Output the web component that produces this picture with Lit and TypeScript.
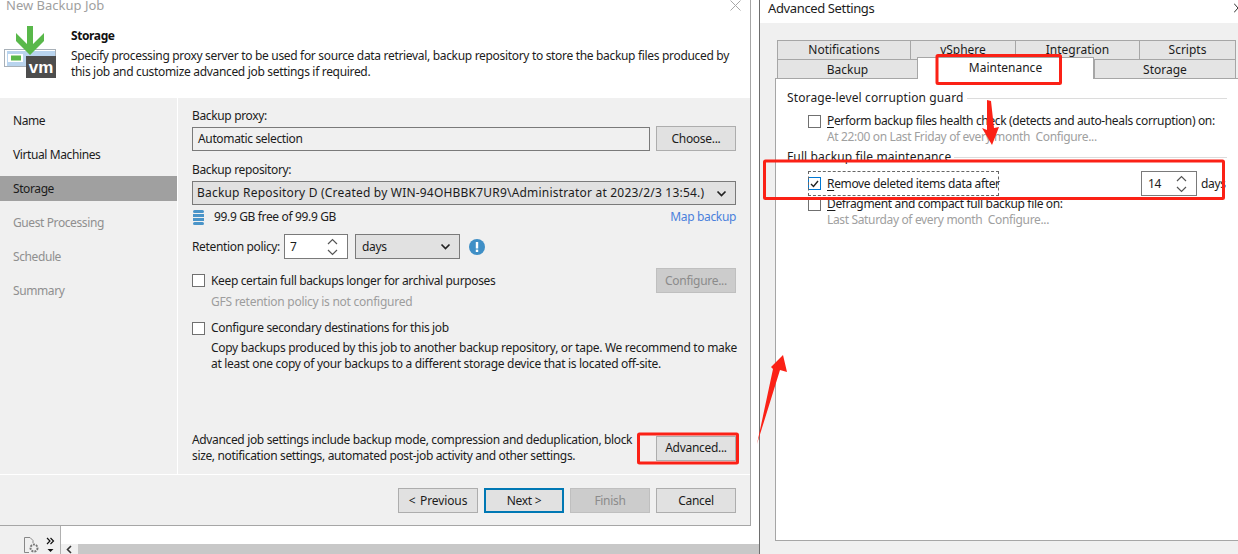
import { LitElement, html, css, svg } from "lit";
import { customElement } from "lit/decorators.js";

const chev = (up: boolean) => svg`<svg class="chev" width="11" height="7" viewBox="0 0 11 7"><path d=${up ? "M1 6 L5.5 1.5 L10 6" : "M1 1 L5.5 5.5 L10 1"} fill="none" stroke="#555" stroke-width="1.2"/></svg>`;
const caret = svg`<svg class="caret" width="11" height="7" viewBox="0 0 11 7"><path d="M1.5 1.5 L5.5 5.5 L9.5 1.5" fill="none" stroke="#222" stroke-width="1.7"/></svg>`;

@customElement("app-root")
export class AppRoot extends LitElement {
  static styles = css`
    :host { display: block; position: relative; width: 1238px; height: 554px; overflow: hidden; background: #fff;
      font-family: "Noto Sans", sans-serif; font-size: 12px; line-height: 16px; color: #1c1c1c; letter-spacing: -.35px; }
    * { box-sizing: border-box; }
    .root { display: flex; height: 554px; }
    .left { width: 760px; flex: none; border-right: 1px solid #6e6e6e; display: flex; flex-direction: column; }
    .dialog { width: 751px; height: 526px; flex: none; border-right: 1px solid #a6a6a6; border-bottom: 1px solid #a6a6a6; display: flex; flex-direction: column; }
    .wtitle { height: 10px; position: relative; display: flex; justify-content: space-between; align-items: center; padding: 0 9px 0 6px; flex: none; }
    .wtitle span { font-size: 13px; color: #a0a0a0; letter-spacing: 0; white-space: nowrap; }
    .head { height: 88px; flex: none; display: flex; background: #fff; }
    .logo { width: 71px; flex: none; position: relative; }
    .logo svg { display: block; }
    .vm { position: absolute; left: 26px; top: 47px; width: 30px; height: 22px; display: flex; align-items: center; justify-content: center; color: #fff; font: bold 17px/20px "Liberation Sans", sans-serif; letter-spacing: 0; }
    .htext { padding-top: 18px; }
    .htext b { display: block; font-weight: 700; color: #111; height: 16px; margin-bottom: 4px; letter-spacing: -.4px; }
    .htext p { margin: 0; width: 670px; letter-spacing: -.32px; }
    .main { flex: 1; display: flex; background: #f0f0f0; border-bottom: 1px solid #fff; min-height: 0; }
    .nav { width: 178px; flex: none; border-right: 1px solid #fff; padding-top: 10px; display: flex; flex-direction: column; gap: 9px; letter-spacing: -.4px; }
    .nav div { height: 25px; padding-left: 13px; display: flex; align-items: center; }
    .nav .sel { background: #a0a0a0; }
    .nav .dim { color: #8f8f8f; }
    .content { flex: 1; padding: 10px 14px 0 14px; display: flex; flex-direction: column; min-width: 0; }
    .lbl { height: 16px; }
    .row { display: flex; align-items: center; }
    .row.between { justify-content: space-between; }
    .input { flex: 1; height: 24px; border: 1px solid #7a7a7a; padding: 0 5px; display: flex; align-items: center; margin-right: 6px; }
    .btn { width: 80px; height: 25px; flex: none; background: #e1e1e1; border: 1px solid #adadad; display: flex; align-items: center; justify-content: center; color: #1c1c1c; letter-spacing: -.3px; }
    .btn.off { background: #cccccc; border-color: #bfbfbf; color: #8b8b8b; }
    .btn.primary { border: 2px solid #0078b4; }
    .btn.prev { letter-spacing: -.1px; word-spacing: 1.5px; }
    .select { height: 24px; background: #e1e1e1; border: 1px solid #7a7a7a; padding: 0 8px 0 4px; display: flex; align-items: center; justify-content: space-between; white-space: nowrap; }
    .select.repo { letter-spacing: .2px; }
    .select.days { width: 105px; padding-left: 6px; margin-left: 7px; height: 25px; }
    .mt2 { margin-top: 2px; }
    .repo-label { margin-top: 11px; margin-bottom: 3px; }
    .free { height: 16px; margin-top: 4px; }
    .free .l { display: flex; align-items: center; gap: 8px; }
    .link { color: #4a80dc; }
    .ret { margin-top: 9px; height: 25px; }
    .ret-label { width: 88px; flex: none; white-space: nowrap; }
    .spin { height: 25px; background: #fff; border: 1px solid #7a7a7a; display: flex; align-items: center; justify-content: space-between; padding: 0 9px 0 5px; flex: none; }
    .spin.ret-s { width: 64px; margin-left: 4px; padding-left: 5px; }
    .arrows { display: flex; flex-direction: column; gap: 4px; }
    .chev { display: block; }
    .info { margin-left: 9px; display: block; }
    .chk { width: 13px; height: 13px; flex: none; background: #fff; border: 1px solid #707070; display: block; }
    .opt { display: flex; align-items: center; gap: 6px; height: 16px; }
    .sub { padding-left: 19px; }
    .gray { color: #9d9d9d; }
    .keep { margin-top: 9px; height: 25px; }
    .gfs { margin-top: 1px; height: 16px; letter-spacing: -.26px; }
    .sec { margin-top: 10px; }
    .copy { margin-top: 4px; margin-right: -6px; letter-spacing: -.31px; }
    .sub p, .adv p { margin: 0; }
    .adv { margin-top: auto; padding-bottom: 10px; display: flex; align-items: center; justify-content: space-between; }
    .adv p { width: 450px; }
    .foot { height: 50px; flex: none; background: #f0f0f0; display: flex; justify-content: flex-end; align-items: flex-start; gap: 6px; padding: 13px 14px 0 0; }
    .strip { flex: 1; display: flex; min-height: 0; }
    .gut { width: 61px; flex: none; background: #f0f0f0; border-right: 1px solid #b0b0b0; position: relative; display: flex; justify-content: flex-end; align-items: flex-end; gap: 5px; padding: 0 5px 0 0; }
    .sb { flex: 1; display: flex; flex-direction: column; justify-content: flex-end; }
    .track { height: 10px; display: flex; background: #c8c8c8; }
    .track i { width: 17px; background: #f0f0f0; display: flex; align-items: center; justify-content: center; }
    .right { flex: 1; min-width: 0; display: flex; flex-direction: column; }
    .rtitle { height: 23px; flex: none; display: flex; align-items: center; justify-content: space-between; padding: 0 0 7px 8px; font-size: 13px; white-space: nowrap; letter-spacing: -.37px; }
    .rbody { flex: 1; background: #f0f0f0; padding: 17px 0 13px 15px; display: flex; flex-direction: column; min-height: 0; }
    .tabs { display: grid; height: 19px; margin-left: 2px; flex: none; letter-spacing: 0; }
    .t1 { grid-template-columns: 133px 105px 124px 97px; }
    .t2 { grid-template-columns: 140px 177px 142px; }
    .tab { background: #e4e4e4; border: 1px solid #a6a6a6; border-bottom: none; border-right: none; display: flex; align-items: center; justify-content: center; }
    .tab:last-child { border-right: 1px solid #a6a6a6; }
    .tab.on { background: #fff; height: 22px; margin-top: -2px; position: relative; z-index: 1; border-right: 1px solid #a6a6a6; padding-bottom: 1px; }
    .panel { flex: 1; background: #fff; border: 1px solid #a6a6a6; border-right: none; margin-top: 0; padding: 11px 11px 0 11px; }
    .leg { display: flex; align-items: center; gap: 3px; height: 16px; white-space: nowrap; letter-spacing: .12px; }
    .leg::after { content: ""; flex: 1; height: 1px; background: #dcdcdc; }
    .leg.second { margin-top: 4px; }
    .popt { display: flex; align-items: center; gap: 6px; height: 16px; margin-left: 21px; white-space: nowrap; }
    .psub { margin-left: 40px; white-space: nowrap; color: #a0a0a0; height: 16px; }
    .u { text-decoration: underline; text-underline-offset: 2px; }
    .mt7 { margin-top: 7px; }
    .rm { display: flex; align-items: center; height: 25px; margin-top: 6px; margin-left: 21px; }
    .focus { display: flex; align-items: center; gap: 6px; height: 25px; width: 191px; outline: 1px dashed #666; outline-offset: -1px; white-space: nowrap; }
    .chk.on { border-color: #0078d4; display: flex; align-items: center; justify-content: center; }
    .spin.days-s { width: 56px; margin-left: auto; padding: 0 9px 0 6px; }
    .dlabel { margin-left: 4px; width: 26px; white-space: nowrap; }
    .anno { position: absolute; left: 0; top: 0; pointer-events: none; z-index: 5; }
  `;

  render() {
    const nav = [["Name", ""], ["Virtual Machines", ""], ["Storage", "sel"], ["Guest Processing", "dim"], ["Schedule", "dim"], ["Summary", "dim"]];
    return html`
      <div class="root">
        <div class="left">
          <div class="dialog">
            <div class="wtitle"><span>New Backup Job</span>
              <svg width="11" height="11" viewBox="0 0 11 11"><path d="M.5 .5 L10.5 10.5 M10.5 .5 L.5 10.5" stroke="#a8a8a8" fill="none"/></svg></div>
            <div class="head">
              <div class="logo">
                <svg width="71" height="88" viewBox="0 10 71 88">
                  <rect x="4.5" y="49.5" width="51" height="17" fill="#fff" stroke="#a8b0b8"/>
                  <rect x="7" y="51" width="48" height="15" fill="#b9d4ee"/>
                  <rect x="8" y="54" width="15" height="8" fill="#fff"/>
                  <rect x="11" y="55.5" width="10" height="5" fill="#59b84a"/>
                  <rect x="26" y="56" width="30" height="22" fill="#4d4d4d"/>
                  <path d="M27 26 H33 V44 L44 33 V41 L30 55 L16 41 V33 L27 44 Z" fill="#59b84a"/>
                </svg>
                <div class="vm">vm</div>
              </div>
              <div class="htext"><b>Storage</b><p>Specify processing proxy server to be used for source data retrieval, backup repository to store the backup files produced by this job and customize advanced job settings if required.</p></div>
            </div>
            <div class="main">
              <div class="nav">${nav.map(([t, c]) => html`<div class=${c}>${t}</div>`)}</div>
              <div class="content">
                <div class="lbl">Backup proxy:</div>
                <div class="row mt2"><div class="input">Automatic selection</div><div class="btn">Choose...</div></div>
                <div class="lbl repo-label">Backup repository:</div>
                <div class="select repo"><span>Backup Repository D (Created by WIN-94OHBBK7UR9\\Administrator at 2023/2/3 13:54.)</span>${caret}</div>
                <div class="row between free">
                  <div class="l"><svg width="14" height="16" viewBox="0 0 14 16"><g fill="#4a94c8"><rect x="1" y="1" width="11" height="3" rx="1.5"/><rect x="1" y="5" width="11" height="3"/><rect x="1" y="9" width="11" height="3"/><rect x="1" y="13" width="11" height="3" rx="1.5"/></g></svg><span>99.9 GB free of 99.9 GB</span></div>
                  <span class="link">Map backup</span>
                </div>
                <div class="row ret">
                  <span class="ret-label">Retention policy:</span>
                  <div class="spin ret-s"><span>7</span><div class="arrows">${chev(true)}${chev(false)}</div></div>
                  <div class="select days"><span>days</span>${caret}</div>
                  <svg class="info" width="16" height="16" viewBox="0 0 16 16"><circle cx="8" cy="8" r="8" fill="#3f8fc6"/><rect x="6.8" y="3" width="2.4" height="6.5" fill="#fff"/><rect x="6.8" y="10.6" width="2.4" height="2.4" fill="#fff"/></svg>
                </div>
                <div class="row between keep">
                  <div class="opt"><span class="chk"></span><span>Keep certain full backups longer for archival purposes</span></div>
                  <div class="btn off">Configure...</div>
                </div>
                <div class="sub gray gfs">GFS retention policy is not configured</div>
                <div class="opt sec"><span class="chk"></span><span>Configure secondary destinations for this job</span></div>
                <div class="sub copy"><p>Copy backups produced by this job to another backup repository, or tape. We recommend to make at least one copy of your backups to a different storage device that is located off-site.</p></div>
                <div class="adv"><p>Advanced job settings include backup mode, compression and deduplication, block size, notification settings, automated post-job activity and other settings.</p><div class="btn">Advanced...</div></div>
              </div>
            </div>
            <div class="foot">
              <div class="btn prev">&lt; Previous</div><div class="btn primary">Next &gt;</div><div class="btn off">Finish</div><div class="btn">Cancel</div>
            </div>
          </div>
          <div class="strip">
            <div class="gut">
              <svg width="18" height="18" viewBox="0 0 18 18"><path d="M1.5 16.5 V1.5 H7 L10 4.5 V7 M1.5 16.5 H6" fill="none" stroke="#888"/><circle cx="11" cy="12" r="3.5" fill="none" stroke="#777" stroke-width="2" stroke-dasharray="2 1"/></svg>
              <svg width="9" height="18" viewBox="0 0 9 18"><path d="M1 2 L4 5 L1 8 M4.5 2 L7.5 5 L4.5 8" fill="none" stroke="#111" stroke-width="1.2"/><path d="M1.5 13 H7.5 L4.5 16 Z" fill="#111"/></svg>
            </div>
            <div class="sb"><div class="track"><i><svg width="7" height="9" viewBox="0 0 7 9"><path d="M5 1 L1.5 4.5 L5 8" fill="none" stroke="#333" stroke-width="1.6"/></svg></i></div></div>
          </div>
        </div>
        <div class="right">
          <div class="rtitle"><span>Advanced Settings</span><svg width="4" height="11" viewBox="0 0 4 11"><path d="M0 .5 L4 5" stroke="#333" fill="none"/><path d="M0 9.5 L4 5" stroke="#333" fill="none"/></svg></div>
          <div class="rbody">
            <div class="tabs t1"><div class="tab">Notifications</div><div class="tab">vSphere</div><div class="tab">Integration</div><div class="tab">Scripts</div></div>
            <div class="tabs t2"><div class="tab">Backup</div><div class="tab on">Maintenance</div><div class="tab">Storage</div></div>
            <div class="panel">
              <div class="leg">Storage-level corruption guard</div>
              <div class="popt mt7"><span class="chk"></span><span><span class="u">P</span>erform backup files health check (detects and auto-heals corruption) on:</span></div>
              <div class="psub">At 22:00 on Last Friday of every month&nbsp; Configure...</div>
              <div class="leg second">Full backup file maintenance</div>
              <div class="rm">
                <div class="focus"><span class="chk on"><svg width="9" height="8" viewBox="0 0 9 8"><path d="M1 4 L3.5 6.5 L8 1" fill="none" stroke="#222" stroke-width="1.4"/></svg></span><span><span class="u">R</span>emove deleted items data after</span></div>
                <div class="spin days-s"><span>14</span><div class="arrows">${chev(true)}${chev(false)}</div></div>
                <span class="dlabel">days</span>
              </div>
              <div class="popt"><span class="chk"></span><span><span class="u">D</span>efragment and compact full backup file on:</span></div>
              <div class="psub">Last Saturday of every month&nbsp; Configure...</div>
            </div>
          </div>
        </div>
      </div>
      <svg class="anno" width="1238" height="554" viewBox="0 0 1238 554">
        <g fill="none" stroke="#fb2116" stroke-width="3">
          <rect x="937" y="55.5" width="123.5" height="28" rx="1"/>
          <rect x="764.5" y="161" width="459" height="37.5" rx="1"/>
          <rect x="638.5" y="434" width="99" height="29" rx="1"/>
        </g>
        <g fill="#fb2116">
          <path d="M987 100 L991 101 L994 128 L999 127 L992 145 L982 128 L987 130 Z"/>
          <path d="M757 444 L773 369 L771 367 L783 355 L787 372 L780 370 Z"/>
        </g>
      </svg>
    `;
  }
}
